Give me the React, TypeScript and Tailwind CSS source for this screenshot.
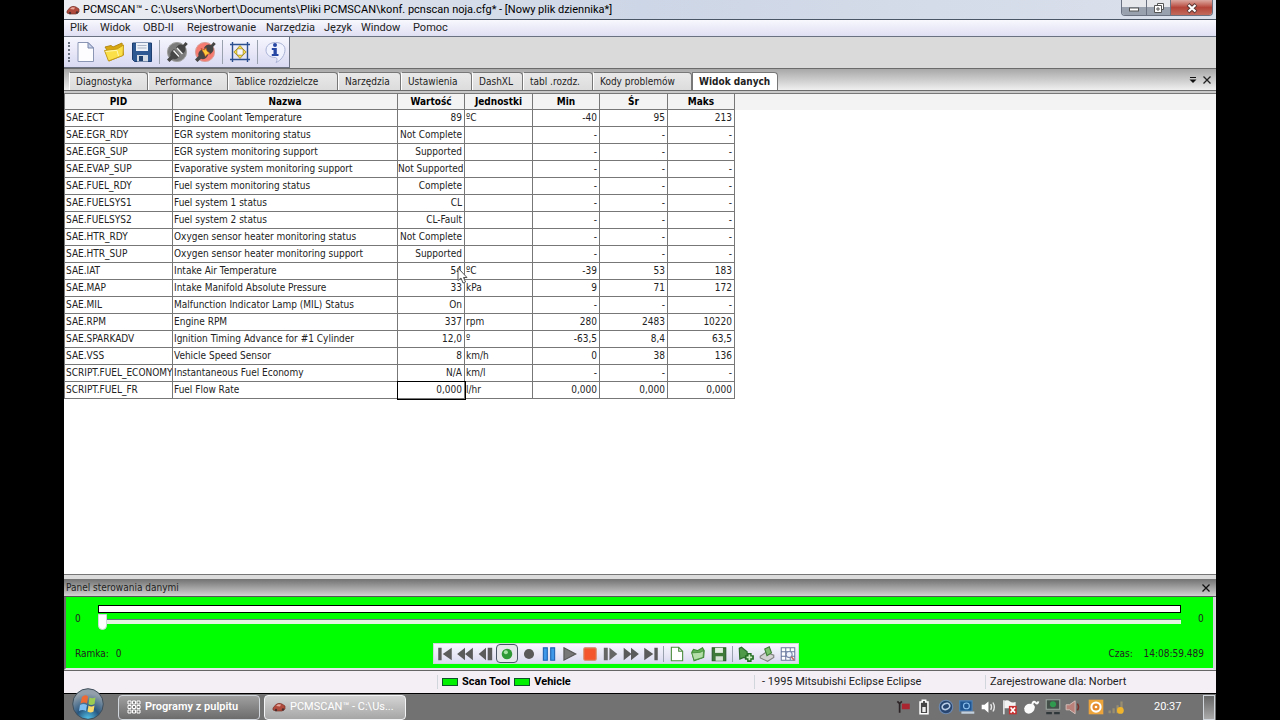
import type { ReactNode } from 'react';
import { useState } from 'react';

const menuItems = [
  { name: 'Plik', width: 'w-[30px]' },
  { name: 'Widok', width: 'w-[43px]' },
  { name: 'OBD-II', width: 'w-[44px]' },
  { name: 'Rejestrowanie', width: 'w-[79px]' },
  { name: 'Narzędzia', width: 'w-[58px]' },
  { name: 'Język', width: 'w-[37px]' },
  { name: 'Window', width: 'w-[52px]' },
  { name: 'Pomoc', width: 'w-[46px]' },
];

const tabs = [
  { name: 'Diagnostyka', width: 'w-[79px]' },
  { name: 'Performance', width: 'w-[80px]' },
  { name: 'Tablice rozdzielcze', width: 'w-[110px]' },
  { name: 'Narzędzia', width: 'w-[63px]' },
  { name: 'Ustawienia', width: 'w-[71px]' },
  { name: 'DashXL', width: 'w-[51px]' },
  { name: 'tabl .rozdz.', width: 'w-[70px]' },
  { name: 'Kody problemów', width: 'w-[99px]' },
  { name: 'Widok danych', width: 'w-[86px]' },
];

const columns = [
  { name: 'PID', width: 'w-[108px]' },
  { name: 'Nazwa', width: 'w-[225px]' },
  { name: 'Wartość', width: 'w-[67px]' },
  { name: 'Jednostki', width: 'w-[68px]' },
  { name: 'Min', width: 'w-[67px]' },
  { name: 'Śr', width: 'w-[68px]' },
  { name: 'Maks', width: 'w-[67px]' },
];

const rows = [
  ['SAE.ECT', 'Engine Coolant Temperature', '89', 'ºC', '-40', '95', '213'],
  ['SAE.EGR_RDY', 'EGR system monitoring status', 'Not Complete', '', '-', '-', '-'],
  ['SAE.EGR_SUP', 'EGR system monitoring support', 'Supported', '', '-', '-', '-'],
  ['SAE.EVAP_SUP', 'Evaporative system monitoring support', 'Not Supported', '', '-', '-', '-'],
  ['SAE.FUEL_RDY', 'Fuel system monitoring status', 'Complete', '', '-', '-', '-'],
  ['SAE.FUELSYS1', 'Fuel system 1 status', 'CL', '', '-', '-', '-'],
  ['SAE.FUELSYS2', 'Fuel system 2 status', 'CL-Fault', '', '-', '-', '-'],
  ['SAE.HTR_RDY', 'Oxygen sensor heater monitoring status', 'Not Complete', '', '-', '-', '-'],
  ['SAE.HTR_SUP', 'Oxygen sensor heater monitoring support', 'Supported', '', '-', '-', '-'],
  ['SAE.IAT', 'Intake Air Temperature', '54', 'ºC', '-39', '53', '183'],
  ['SAE.MAP', 'Intake Manifold Absolute Pressure', '33', 'kPa', '9', '71', '172'],
  ['SAE.MIL', 'Malfunction Indicator Lamp (MIL) Status', 'On', '', '-', '-', '-'],
  ['SAE.RPM', 'Engine RPM', '337', 'rpm', '280', '2483', '10220'],
  ['SAE.SPARKADV', 'Ignition Timing Advance for #1 Cylinder', '12,0', 'º', '-63,5', '8,4', '63,5'],
  ['SAE.VSS', 'Vehicle Speed Sensor', '8', 'km/h', '0', '38', '136'],
  ['SCRIPT.FUEL_ECONOMY', 'Instantaneous Fuel Economy', 'N/A', 'km/l', '-', '-', '-'],
  ['SCRIPT.FUEL_FR', 'Fuel Flow Rate', '0,000', 'l/hr', '0,000', '0,000', '0,000'],
];

function Icon({ size = 16, box, children }: { size?: number; box?: number; children: ReactNode }) {
  return (
    <svg
      width={size}
      height={size}
      viewBox={`0 0 ${box ?? size} ${box ?? size}`}
      className="block shrink-0"
      aria-hidden="true"
    >
      {children}
    </svg>
  );
}

function CarIcon() {
  return (
    <Icon size={14}>
      <path d="M1 8 L4 4.5 Q7 2.5 10 4 L13 6 V9 L10 11 H4 L1 10 Z" fill="#b04a3c" stroke="#7a332a" strokeWidth=".7" />
      <path d="M4 6 L6 4.2 L9 4.6 L8 6.6 Z" fill="#e8a99c" />
      <circle cx="4" cy="10" r="1.2" fill="#4a2f2f" />
      <circle cx="11" cy="9.5" r="1.2" fill="#4a2f2f" />
    </Icon>
  );
}

function PlugIcon({ live }: { live?: boolean }) {
  return (
    <Icon size={22}>
      <circle cx="11" cy="11" r="9.6" fill={live ? '#f57a70' : '#7b7b7b'} stroke={live ? '#d9a09a' : '#a0a0a0'} />
      <path d="M1 18.5 L4.5 15 Q3.500 11.500 7 9 L8 8 L14 14.500 L12 17 Q9 19 7 17.800 L3.500 21 Z" fill="#474747" />
      <path d="M19.500 1 L17 4 Q13.500 2.500 11 5.500 L10 7 L16 13.500 L18 11.500 Q20.500 9 19 6 L21.800 3 Z" fill="#454545" />
      {live ? (
        <path
          d="M7 7.500 L10.500 9 L12 6.500 L13 10 L16.500 12.500 L13 13.500 L11.500 16 L10 12.500 Z"
          fill="#ffc93a"
          stroke="#a33b1e"
          strokeWidth=".6"
        />
      ) : (
        <path d="M7.500 9.500 L13 15.500 M11 7 L16.500 13" stroke="#f4f4f4" strokeWidth="1.4" />
      )}
    </Icon>
  );
}

const toolbarGroups = [
  [
    {
      label: 'Nowy',
      icon: (
        <Icon size={22}>
          <path d="M3 1.500 H13 L18.500 7 V20.500 H3 Z" fill="#fdfdff" stroke="#8b96b4" />
          <path d="M13 1.500 V7 H18.500 Z" fill="#c9d3ea" stroke="#7886ac" />
        </Icon>
      ),
    },
    {
      label: 'Otwórz',
      icon: (
        <Icon size={22}>
          <path d="M4 9 L2 6 L8 4.500 L10 6 L19 2 L20.500 14 L6 20 Z" fill="#d9a70f" stroke="#b48a16" />
          <path d="M1.500 9.500 L14 8 L20.500 4 L20 14.500 L5.500 20 Z" fill="#fbe04a" stroke="#c39a1b" />
          <path d="M2.500 10.500 L14 9.300 L15.500 15" stroke="#fff7ae" fill="none" />
        </Icon>
      ),
    },
    {
      label: 'Zapisz',
      icon: (
        <Icon size={22}>
          <path d="M1.500 2 H20.500 V20.500 H3.500 L1.500 18.500 Z" fill="#2d5891" stroke="#1d3e70" />
          <path d="M5 2 H17 V10 H5 Z" fill="#eef2f8" />
          <path d="M6.500 4.500 H15.500 M6.500 7 H15.500" stroke="#aab4c6" />
          <path d="M6 14 H17 V20.500 H6 Z" fill="#d4dae3" />
          <path d="M8 15 H12 V20 H8 Z" fill="#20406e" />
        </Icon>
      ),
    },
  ],
  [
    { label: 'Połącz', icon: <PlugIcon /> },
    { label: 'Rozłącz', icon: <PlugIcon live /> },
  ],
  [
    {
      label: 'Dopasuj',
      icon: (
        <Icon size={22}>
          <path d="M3.500 1 V21 M18.500 1 V21 M1 3.500 H21 M1 18.500 H21" stroke="#2b4f8f" strokeWidth="1.400" />
          <path
            d="M11 4.500 L14 8 H8 Z M11 17.500 L14 14 H8 Z M4.800 11 L8 8 V14 Z M17.200 11 L14 8 V14 Z"
            fill="#f8e04c"
            stroke="#9a8220"
            strokeWidth=".8"
          />
          <path d="M8.500 8.500 H13.500 V13.500 H8.500 Z" fill="#f7f7fb" />
        </Icon>
      ),
    },
  ],
  [
    {
      label: 'Informacje',
      icon: (
        <Icon size={22}>
          <path
            d="M2 9 C2 -1 21 -1 21 8.500 C21 14 17 19.500 12 21.500 C13.500 19 13.500 17 11.500 16.500 C5 16.500 2 13 2 9 Z"
            fill="#f0f2fe"
            stroke="#aab3d6"
          />
          <circle cx="11" cy="4" r="2" fill="#2747a5" />
          <path d="M7.800 7 H12.800 V13 H14.500 V15 H7.800 V13 H9.500 V9 H7.800 Z" fill="#2747a5" />
        </Icon>
      ),
    },
  ],
];

const playerButtons = [
  { label: 'Początek', icon: <path d="M2 2.500 H5 V13.500 H2 Z M14 2.500 V13.500 L6 8 Z" fill="#5b5b5b" /> },
  { label: 'Przewiń wstecz', icon: <path d="M8 2.500 V13.500 L1 8 Z M15 2.500 V13.500 L8 8 Z" fill="#5b5b5b" /> },
  { label: 'Klatka wstecz', icon: <path d="M8 2.500 V13.500 L1.500 8 Z M9.500 2.500 H13.500 V13.500 H9.500 Z" fill="#5b5b5b" /> },
  {
    label: 'Monitoruj',
    pressed: true,
    icon: (
      <>
        <circle cx="8" cy="8" r="4.700" fill="#2f9a35" />
        <circle cx="7" cy="6.500" r="1.800" fill="#a6e3a2" />
      </>
    ),
  },
  { label: 'Nagrywaj', icon: <circle cx="8" cy="8" r="4.500" fill="#5a5a5a" /> },
  {
    label: 'Pauza',
    icon: <path d="M3 2.500 H6.500 V13.500 H3 Z M9.500 2.500 H13 V13.500 H9.500 Z" fill="#3f97ea" stroke="#1f65b4" />,
  },
  { label: 'Odtwarzaj', icon: <path d="M3.500 2.500 L14 8 L3.500 13.500 Z" fill="#777" stroke="#555" /> },
  { label: 'Zatrzymaj', icon: <rect x="2.500" y="2.500" width="11" height="11" rx="1" fill="#f4552c" stroke="#d88a68" /> },
  { label: 'Klatka naprzód', icon: <path d="M2.500 2.500 H6 V13.500 H2.500 Z M7.500 2.500 L14.500 8 L7.500 13.500 Z" fill="#666" /> },
  { label: 'Przewiń naprzód', icon: <path d="M1.500 2.500 L8.500 8 L1.500 13.500 Z M8 2.500 L15 8 L8 13.500 Z" fill="#5b5b5b" /> },
  { label: 'Koniec', icon: <path d="M2 2.500 L10 8 L2 13.500 Z M11 2.500 H14 V13.500 H11 Z" fill="#5b5b5b" /> },
];

const fileButtons = [
  { label: 'Nowy dziennik', icon: <path d="M3 2 H9.500 L13 5.500 V14 H3 Z M9.500 2 V5.500 H13" fill="#fff" stroke="#4f8f3f" /> },
  {
    label: 'Otwórz dziennik',
    icon: (
      <>
        <path d="M2.500 6.500 L4 4 L7.500 5 L12 2.500 L13.500 5 L13 11 L4.500 14 Z" fill="#5fae52" stroke="#3f8a36" />
        <path d="M2.500 7 L10 6.500 L13 5 L12.500 11 L4.500 13.500 Z" fill="#b4dfa9" stroke="#3f8a36" strokeWidth=".7" />
      </>
    ),
  },
  {
    label: 'Zapisz dziennik',
    icon: (
      <>
        <path d="M2 2.500 H14 V14 H2 Z" fill="#3f7a39" stroke="#2c5c2b" />
        <path d="M4.500 2.500 H11.500 V7 H4.500 Z" fill="#e5efe2" />
        <path d="M5 10 H11.500 V14 H5 Z" fill="#d6e2d3" />
      </>
    ),
  },
];

const exportButtons = [
  {
    label: 'Dodaj',
    icon: (
      <>
        <path d="M2 3 L4 2 L9 6 V12 L6 11 L2.500 12.500 Z" fill="#4f9a48" stroke="#2b6b2c" />
        <path d="M11 7 V15 M7 11 H15" stroke="#226d23" strokeWidth="4" />
        <path d="M11 8.500 V13.500 M8.500 11 H13.500" stroke="#c9efc0" strokeWidth="1.500" />
      </>
    ),
  },
  {
    label: 'Drukuj',
    icon: (
      <>
        <path d="M2 10 L7 6.500 L14 9 L14 11 L8.500 14.500 L2 11.500 Z" fill="#d2d2d2" stroke="#808080" />
        <path d="M6 3.500 L10 1.500 L12 7 L8 9.500 Z" fill="#7cc06d" stroke="#3f7f3a" />
      </>
    ),
  },
  {
    label: 'Siatka',
    icon: (
      <>
        <path
          d="M2 2.500 H14 V13.500 H2 Z M2 6 H14 M2 10 H14 M6 2.500 V13.500 M10 2.500 V13.500"
          fill="#fff"
          stroke="#68789c"
          strokeWidth=".9"
        />
        <circle cx="9" cy="8.500" r="2.700" fill="#eef2fb" stroke="#7a88ad" />
        <path d="M11 10.500 L13.500 13.500" stroke="#c06a6a" strokeWidth="1.500" />
      </>
    ),
  },
];

const trayIcons = [
  {
    label: 'Klucz',
    icon: (
      <>
        <path d="M3 3 L5 5 L7 3 M5 5 V13" stroke="#2c2326" strokeWidth="1.500" fill="none" />
        <path d="M7 5 H14 V10 H7 Z" fill="#a92630" />
      </>
    ),
  },
  {
    label: 'Bateria',
    icon: (
      <>
        <path d="M4.500 3.500 H6.500 V2 H9.500 V3.500 H11.500 V14 H4.500 Z" fill="#444" stroke="#fff" strokeWidth="1.400" />
        <path d="M6.500 8 H9.500 V12.500 H6.500 Z" fill="#eee" />
      </>
    ),
  },
  {
    label: 'Przeglądarka',
    icon: (
      <>
        <circle cx="8" cy="8" r="6" fill="#27456f" stroke="#6c8ab3" />
        <ellipse cx="8" cy="7.500" rx="3.500" ry="2.600" fill="none" stroke="#b9cce6" strokeWidth="1.500" transform="rotate(-25 8 7.500)" />
      </>
    ),
  },
  {
    label: 'Dysk',
    icon: (
      <>
        <path d="M1.500 2.500 H12.500 V11.500 H1.500 Z" fill="#1f5590" stroke="#4f82b8" />
        <path d="M3 12 H14.500 V14 H3 Z" fill="#c2cfdd" />
        <circle cx="7.500" cy="7" r="2.600" fill="none" stroke="#8ec1ef" />
      </>
    ),
  },
  {
    label: 'Głośność',
    icon: (
      <>
        <path d="M1.500 6 H4 L7.500 3 V13 L4 10 H1.500 Z" fill="#fff" />
        <path d="M9.500 5.500 Q11 8 9.500 10.500 M11.500 4 Q14 8 11.500 12" stroke="#e8e8e8" fill="none" strokeWidth="1.200" />
      </>
    ),
  },
  {
    label: 'Powiadomienia',
    icon: (
      <>
        <path d="M2.500 2 V14.500" stroke="#ddd" strokeWidth="1.500" />
        <path d="M3 2.500 Q6 1.500 8 3 T13 3.500 V9 H3 Z" fill="#f3f3f3" />
        <path d="M7 7 H14 V14.500 H7 Z" fill="#c92f2f" />
        <path d="M8.500 8.500 L12.500 13 M12.500 8.500 L8.500 13" stroke="#fff" strokeWidth="1.400" />
      </>
    ),
  },
  {
    label: 'Mysz',
    icon: (
      <>
        <path d="M2 9 Q3 5 7 5 Q11 5 11.500 8 Q11 13 6 14 Q2 13.500 2 9 Z" fill="#fbfbfb" />
        <path d="M9 6 Q10 2 12 4 T14.500 3" stroke="#fbfbfb" strokeWidth="1.800" fill="none" />
      </>
    ),
  },
  {
    label: 'Sieć',
    icon: (
      <>
        <path d="M2 1.500 H14 V10 H2 Z" fill="#435049" stroke="#9aa59e" />
        <circle cx="8" cy="5.500" r="2.700" fill="#2f9b4e" />
        <path d="M2 13.500 H7 M9 13.500 H14" stroke="#30373a" strokeWidth="2" />
      </>
    ),
  },
  {
    label: 'Audio',
    icon: (
      <>
        <path d="M1 6 H4 L9 2.500 V14 L4 10.500 H1 Z" fill="#b88078" stroke="#d9c4bf" strokeWidth=".800" />
        <path d="M11 5 Q13 8 11 11" stroke="#7c302a" fill="none" strokeWidth="1.400" />
      </>
    ),
  },
  {
    label: 'Odtwarzacz',
    icon: (
      <>
        <path d="M1.500 1.500 H14.500 V14.500 H1.500 Z" fill="#eda53b" />
        <circle cx="8" cy="8" r="5" fill="#fff" />
        <circle cx="8" cy="8" r="3.200" fill="#e58a2c" />
        <circle cx="8" cy="8" r="1.200" fill="#fff" />
      </>
    ),
  },
  {
    label: 'Zasięg',
    icon: (
      <>
        <path d="M1.500 11 V13.500 M5 9 V13.500 M8.500 6.500 V13.500 M12 3 V13.500" stroke="#998f70" strokeWidth="2" />
        <circle cx="11" cy="11" r="3" fill="#f0b42c" />
      </>
    ),
  },
];

type Tool = { label: string; icon: ReactNode; pressed?: boolean };

function SmallTools({ tools }: { tools: Tool[] }) {
  return (
    <>
      {tools.map((tool) => (
        <button
          key={tool.label}
          aria-label={tool.label}
          className={`flex h-[19px] flex-1 items-center justify-center rounded-sm ${
            tool.pressed ? 'border border-gray-600 bg-gray-200' : ''
          }`}
        >
          <Icon size={18} box={16}>
            {tool.icon}
          </Icon>
        </button>
      ))}
    </>
  );
}

function TitleBar() {
  return (
    <header className="flex h-5 items-start justify-between border-b border-gray-600 bg-gradient-to-r from-[#eceef3] via-[#cdd6e6] to-[#dbe1ec] pl-[2px]">
      <div className="flex h-[19px] items-center gap-[3px]">
        <CarIcon />
        <h1 className="whitespace-nowrap text-[11px] text-black">
          PCMSCAN™ - C:\Users\Norbert\Documents\Pliki PCMSCAN\konf. pcnscan noja.cfg* - [Nowy plik dziennika*]
        </h1>
      </div>
      <div className="mr-[3px] flex h-4 overflow-hidden rounded-b border border-t-0 border-gray-500">
        <button aria-label="Minimalizuj" className="flex w-[25px] items-center justify-center border-r border-gray-500 bg-gradient-to-b from-gray-200 from-50% to-gray-400 to-50%">
          <Icon size={12}>
            <rect x="1.500" y="6" width="9" height="3" fill="#fff" stroke="#555" />
          </Icon>
        </button>
        <button aria-label="Przywróć" className="flex w-6 items-center justify-center border-r border-gray-500 bg-gradient-to-b from-gray-200 from-50% to-gray-400 to-50%">
          <Icon size={12}>
            <path d="M4.500 1.500 H10.500 V7.500 H4.500 Z" fill="#fff" stroke="#555" />
            <path d="M1.500 3.500 H8.500 V10.500 H1.500 Z M4 6 H6 V8 H4 Z" fill="#fff" stroke="#555" />
          </Icon>
        </button>
        <button aria-label="Zamknij" className="flex w-[41px] items-center justify-center bg-gradient-to-b from-[#dba9a2] via-[#b5443a] to-[#c06a5c]">
          <Icon size={12}>
            <path d="M2 2.500 L10 10 M10 2.500 L2 10" stroke="#5b3734" strokeWidth="4" />
            <path d="M2.500 3 L9.500 9.500 M9.500 3 L2.500 9.500" stroke="#fff" strokeWidth="2.200" />
          </Icon>
        </button>
      </div>
    </header>
  );
}

function MainToolbar() {
  return (
    <div className="flex h-[31px] bg-[#dadada]">
      <div className="flex items-center border-r border-b border-gray-500 bg-gradient-to-b from-[#f6f6fe] to-[#d9d9f2] pl-1">
        <div className="h-5 w-1 border-l-2 border-dotted border-gray-500" />
        {toolbarGroups.map((group, i) => (
          <div key={group[0].label} className="flex items-center">
            {i > 0 && <div className="mx-[3px] h-6 w-px bg-gray-400" />}
            {group.map((tool) => (
              <button key={tool.label} aria-label={tool.label} className="flex h-7 w-7 items-center justify-center">
                {tool.icon}
              </button>
            ))}
          </div>
        ))}
      </div>
    </div>
  );
}

function TabStrip() {
  const [active, setActive] = useState('Widok danych');

  return (
    <div className="flex h-[23px] items-end justify-between border-t border-b border-[#6b6b6b] bg-gradient-to-b from-[#a8a8a8] to-[#f0f0f0] pl-1">
      <div role="tablist" className="flex pl-px">
        {tabs.map((tab) => (
          <button
            key={tab.name}
            role="tab"
            aria-selected={active === tab.name}
            onClick={() => setActive(tab.name)}
            className={`${tab.width} h-[18px] rounded-tr-sm border-t border-r border-l pl-[6px] text-left whitespace-nowrap ${
              active === tab.name
                ? 'border-[#777] bg-white font-bold'
                : 'border-t-[#777] border-r-[#777] border-l-white bg-gradient-to-b from-[#e9e9e9] to-[#dcdcdc]'
            }`}
          >
            {tab.name}
          </button>
        ))}
      </div>
      <div className="flex h-5 items-center gap-1 pr-1">
        <button aria-label="Lista kart">
          <Icon size={10}>
            <path d="M2 2.500 H8" stroke="#111" />
            <path d="M1.500 4.500 H8.500 L5 8 Z" fill="#111" />
          </Icon>
        </button>
        <button aria-label="Zamknij kartę">
          <Icon size={10}>
            <path d="M1.500 1.500 L8.500 8.500 M8.500 1.500 L1.500 8.500" stroke="#222" strokeWidth="1.300" />
          </Icon>
        </button>
      </div>
    </div>
  );
}

function Pointer() {
  return (
    <svg width="12" height="18" viewBox="0 0 12 18" className="absolute -right-1 top-1 z-10" aria-hidden="true">
      <path d="M2 1 V13.500 L5 11 L7 16 L9.500 15 L7.500 10.500 H11 Z" fill="#fff" stroke="#555" />
    </svg>
  );
}

function DataTable() {
  return (
    <div className="flex-1 border-t border-[#777] bg-white">
      <div className="bg-gradient-to-b from-[#f3f3f3] from-[16px] to-white to-[16px]">
        <table className="w-[671px] table-fixed border-separate border-spacing-0 border-l border-[#777]">
          <thead>
            <tr>
              {columns.map((column) => (
                <th
                  key={column.name}
                  className={`${column.width} h-4 border-r border-b border-[#777] p-0 text-center leading-[15px] font-bold text-black`}
                >
                  {column.name}
                </th>
              ))}
            </tr>
          </thead>
          <tbody>
            {rows.map((row) => (
              <tr key={row[0]}>
                {row.map((cell, i) => {
                  const selected = row[0] === 'SCRIPT.FUEL_FR' && i === 2;
                  const pointed = row[0] === 'SAE.IAT' && i === 2;
                  return (
                    <td
                      key={columns[i].name}
                      className={`h-[17px] border-r border-b border-[#777] p-0 leading-[16px] whitespace-nowrap ${
                        i === 2 || i > 3 ? 'pr-[2px] text-right' : 'overflow-hidden pl-px'
                      } ${selected ? 'outline outline-black' : ''} ${pointed ? 'relative' : ''}`}
                    >
                      {cell}
                      {pointed && <Pointer />}
                    </td>
                  );
                })}
              </tr>
            ))}
          </tbody>
        </table>
      </div>
    </div>
  );
}

function ControlPanel() {
  const [frame, setFrame] = useState(0);

  return (
    <section className="border-t border-[#777] bg-[#dcdcdc] pt-1">
      <div className="flex h-[18px] items-center justify-between border-b border-[#555] bg-gradient-to-b from-[#727272] to-[#d2d2d2] pr-[5px] pl-[2px]">
        <h2>Panel sterowania danymi</h2>
        <button aria-label="Zamknij panel">
          <Icon size={10}>
            <path d="M1.500 1.500 L8.500 8.500 M8.500 1.500 L1.500 8.500" stroke="#111" strokeWidth="1.300" />
          </Icon>
        </button>
      </div>
      <div className="mr-px border-r-2 border-b-2 border-l-2 border-r-gray-300 border-b-gray-200 border-l-[#6b6b6b] bg-[#00ff00] px-[9px] pt-2 pb-1">
        <div className="flex items-center gap-[17px]">
          <label htmlFor="frame" className="w-[6px] pt-1">0</label>
          <div className="flex-1">
            <div className="h-2 border border-black bg-white" />
            <input
              id="frame"
              type="range"
              min={0}
              max={100}
              value={frame}
              onChange={(e) => setFrame(Number(e.target.value))}
              className="block h-4 w-full appearance-none bg-transparent [&::-webkit-slider-runnable-track]:h-[5px] [&::-webkit-slider-runnable-track]:border-t [&::-webkit-slider-runnable-track]:border-gray-500 [&::-webkit-slider-runnable-track]:bg-[#e4f4e0] [&::-webkit-slider-thumb]:-mt-[6px] [&::-webkit-slider-thumb]:h-4 [&::-webkit-slider-thumb]:w-[9px] [&::-webkit-slider-thumb]:appearance-none [&::-webkit-slider-thumb]:rounded-b-[5px] [&::-webkit-slider-thumb]:border [&::-webkit-slider-thumb]:border-gray-300 [&::-webkit-slider-thumb]:bg-white"
            />
          </div>
          <span className="w-[6px] pt-1">0</span>
        </div>
        <div className="mt-[14px] flex items-center">
          <div className="flex-[358]">
            Ramka: <span className="pl-1">{frame}</span>
          </div>
          <div className="flex h-[21px] w-[366px] items-center border border-gray-300 bg-gradient-to-b from-[#f8f8ff] to-[#dadaf0]">
            <div className="flex w-[227px]">
              <SmallTools tools={playerButtons} />
            </div>
            <div className="mx-[2px] h-4 w-px bg-gray-400" />
            <div className="flex flex-1">
              <SmallTools tools={fileButtons} />
            </div>
            <div className="mx-[2px] h-4 w-px bg-gray-400" />
            <div className="flex flex-1">
              <SmallTools tools={exportButtons} />
            </div>
          </div>
          <div className="flex-[404] text-right">
            Czas: <span className="pl-2">14:08:59.489</span>
          </div>
        </div>
      </div>
    </section>
  );
}

function StatusBar() {
  return (
    <div className="flex h-6 items-center border-t border-b border-t-[#666] border-b-black bg-[#f4eff5] text-[11px] whitespace-nowrap">
      <div className="flex-[373]" />
      <div className="flex flex-[312] items-center gap-1 border-l border-gray-300 pl-1 font-bold text-black">
        <span className="h-2 w-4 border border-green-900 bg-[#00f000]" />
        Scan Tool
        <span className="h-2 w-4 border border-green-900 bg-[#00f000]" />
        Vehicle
      </div>
      <div className="flex-[223] border-l border-gray-300 pl-[7px]">- 1995 Mitsubishi Eclipse Eclipse</div>
      <div className="flex-[226] border-l border-gray-300 pl-1">Zarejestrowane dla: Norbert</div>
    </div>
  );
}

function TaskBar() {
  return (
    <footer className="flex h-[26px] items-center bg-[#727272] text-[11px] text-white">
      <div className="relative h-full w-[54px]">
        <button aria-label="Start" className="absolute -top-[6px] left-2">
          <Icon size={32}>
            <defs>
              <radialGradient id="orb" cx="50%" cy="100%" r="85%">
                <stop offset="0" stopColor="#53c8ef" />
                <stop offset=".45" stopColor="#28567f" />
                <stop offset="1" stopColor="#93a0ab" />
              </radialGradient>
            </defs>
            <circle cx="16" cy="16" r="15.300" fill="url(#orb)" stroke="#3f4e5b" />
            <path d="M10 9 Q13 6 16 8.500 L15 15.500 Q12 13.500 8.500 15.500 Z" fill="#ee6a35" />
            <path d="M17.500 9.500 Q20 11 23.500 9.500 L22.500 16 Q19 18 16.500 16 Z" fill="#9acb52" />
            <path d="M8 17 Q11.500 15 15 17 L14 23 Q10.500 21 7 23 Z" fill="#7fbef0" />
            <path d="M16.500 17.500 Q19 19.500 22.500 17.500 L21.500 23.500 Q18.500 25.500 15.500 23.500 Z" fill="#fbd96a" />
          </Icon>
        </button>
      </div>
      <button className="flex h-[25px] w-[142px] items-center gap-1 rounded-sm border border-gray-300 bg-gradient-to-b from-[#a0a0a0] to-[#6c6c6c] pl-2 font-semibold whitespace-nowrap">
        <Icon size={14}>
          <path
            d="M1 1 H4 V4 H1 Z M5.500 1 H8.500 V4 H5.500 Z M10 1 H13 V4 H10 Z M1 5.500 H4 V8.500 H1 Z M5.500 5.500 H8.500 V8.500 H5.500 Z M10 5.500 H13 V8.500 H10 Z M1 10 H4 V13 H1 Z M5.500 10 H8.500 V13 H5.500 Z M10 10 H13 V13 H10 Z"
            fill="#777"
            stroke="#fff"
          />
        </Icon>
        Programy z pulpitu
      </button>
      <button className="ml-1 flex h-[25px] w-[142px] items-center gap-1 rounded-sm border border-gray-100 bg-gradient-to-b from-[#d4d4d4] to-[#a6a6a6] pl-[7px] whitespace-nowrap">
        <CarIcon />
        PCMSCAN™ - C:\Us...
      </button>
      <div className="ml-auto flex w-[232px] items-center justify-between">
        {trayIcons.map((tray) => (
          <button key={tray.label} aria-label={tray.label}>
            <Icon size={18} box={16}>
              {tray.icon}
            </Icon>
          </button>
        ))}
      </div>
      <time className="ml-7 w-[27px]">20:37</time>
      <button aria-label="Pokaż pulpit" className="mr-px ml-[22px] h-[25px] w-3 border border-gray-300 bg-gradient-to-b from-[#666] to-[#aaa]" />
    </footer>
  );
}

function App() {
  return (
    <div className="min-h-screen bg-black px-16 font-['Roboto',sans-serif]">
      <main className="flex min-h-screen flex-col bg-[#dadada] leading-[14px] text-[#222]">
        <TitleBar />
        <nav className="flex h-[17px] items-center border-b border-gray-500 bg-gradient-to-b from-[#f8f8fe] to-[#dfdff3] pl-[6px] text-[11px]">
          {menuItems.map((item) => (
            <button key={item.name} className={`${item.width} text-left whitespace-nowrap`}>
              {item.name}
            </button>
          ))}
        </nav>
        <MainToolbar />
        <div className="flex flex-1 flex-col font-['DejaVu_Sans_Condensed','DejaVu_Sans',sans-serif] text-[10px]">
          <TabStrip />
          <div className="h-[2px] bg-[#c8c8c8]" />
          <DataTable />
          <ControlPanel />
        </div>
        <StatusBar />
        <TaskBar />
      </main>
    </div>
  );
}

export default App;
